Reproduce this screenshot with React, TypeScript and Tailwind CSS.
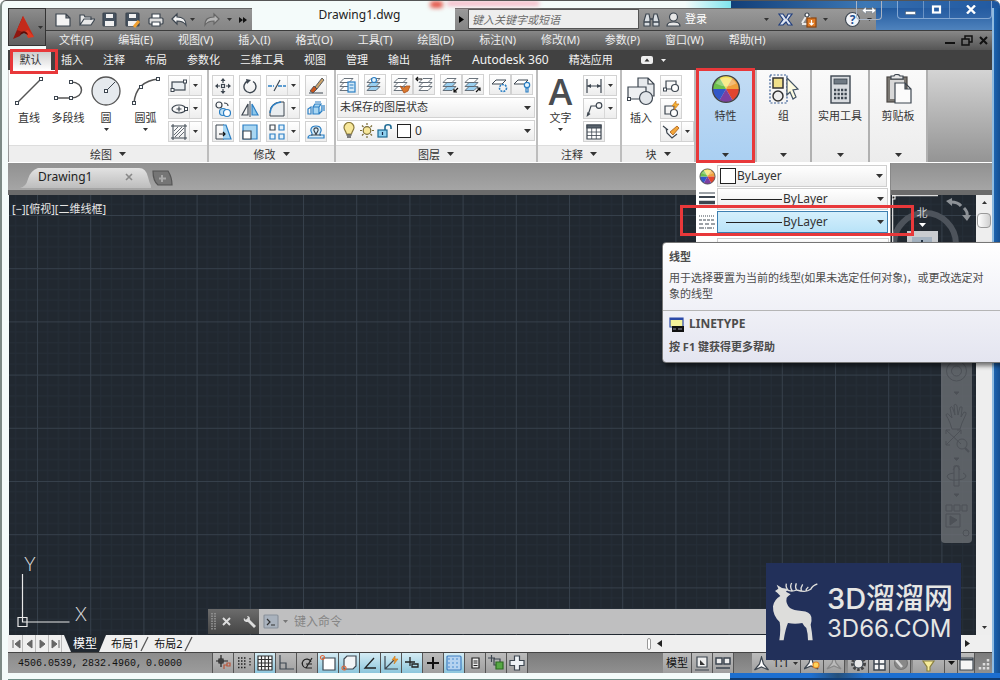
import type { ReactNode } from "react";
import clsx from "clsx";

const INK = "#3d4650";
const BLUE = "#2b7fc4";

function Svg({ w = 18, h, box, children }: { w?: number; h?: number; box?: string; children: ReactNode }) {
  const height = h ?? w;
  return (
    <svg
      width={w}
      height={height}
      viewBox={box ?? `0 0 ${w} ${height}`}
      fill="none"
      stroke={INK}
      strokeWidth={1.2}
      className="block shrink-0"
      aria-hidden="true"
    >
      {children}
    </svg>
  );
}

function Caret({ small = false, color = "#333" }: { small?: boolean; color?: string }) {
  return (
    <svg
      width={small ? 5 : 7}
      height={small ? 3 : 4}
      viewBox="0 0 8 4"
      preserveAspectRatio="none"
      className="block shrink-0"
      aria-hidden="true"
    >
      <path d="M0 0h8L4 4z" fill={color} />
    </svg>
  );
}

/* ---------- drawing pieces reused by several icons ---------- */

function Node({ x, y }: { x: number; y: number }) {
  return <rect x={x - 1.5} y={y - 1.5} width={3} height={3} fill="#fff" strokeWidth={1} />;
}

function Sheets({ tint = "#fff", x = 0 }: { tint?: string; x?: number }) {
  return (
    <g transform={`translate(${x} 0)`} fill={tint} stroke="#59636d" strokeWidth={0.9}>
      <path d="M1 14.500l4-4h9l-4 4z" />
      <path d="M1 10.500l4-4h9l-4 4z" />
      <path d="M1 6.500l4-4h9l-4 4z" fill="#fff" />
    </g>
  );
}

function Wheel({ size }: { size: number }) {
  const colors = ["#f6e35a", "#f0a03c", "#e2452f", "#7c3fa0", "#3157c8", "#6cbf4b"];
  const pt = (i: number) => {
    const a = ((i * 60 - 120) * Math.PI) / 180;
    return `${16 + 14 * Math.cos(a)} ${16 + 14 * Math.sin(a)}`;
  };
  return (
    <Svg w={size} box="0 0 32 32">
      {colors.map((c, i) => (
        <path key={c} d={`M16 16L${pt(i)}A14 14 0 0 1 ${pt(i + 1)}z`} fill={c} stroke="none" />
      ))}
      <path d="M5 10a13 13 0 0 1 22 0q-11 6-22 0z" fill="#fff" opacity={0.3} stroke="none" />
      <circle cx={16} cy={16} r={14.3} stroke="#444" strokeWidth={1.5} />
    </Svg>
  );
}

/* ---------- title bar ---------- */

const quickAccess: { label: string; icon: ReactNode }[] = [
  {
    label: "新建",
    icon: <path d="M1 3h10l4 4v8H1zM11 3v4h4" fill="#f4f4f4" />,
  },
  {
    label: "打开",
    icon: <path d="M2 14V4h4l1 2h6v3M2 14l4-6h11l-4 6z" fill="#e8e8e8" />,
  },
  {
    label: "保存",
    icon: (
      <>
        <rect x={2} y={2} width={13} height={13} rx={1} fill="#46525f" />
        <path d="M5 3h7v4H5zM4 10h9v5H4z" fill="#f0f0f0" stroke="none" />
      </>
    ),
  },
  {
    label: "另存为",
    icon: (
      <>
        <rect x={2} y={2} width={13} height={13} rx={1} fill="#46525f" />
        <path d="M5 3h7v4H5zM4 10h9v5H4z" fill="#f0f0f0" stroke="none" />
        <path d="M10 16l5-6" stroke="#f0a030" strokeWidth={3} />
      </>
    ),
  },
  {
    label: "打印",
    icon: (
      <>
        <path d="M5 7V3h8v4" fill="#fff" />
        <rect x={2} y={7} width={14} height={6} rx={1} fill="#ddd" />
        <path d="M5 11h8v4H5z" fill="#fff" />
      </>
    ),
  },
  {
    label: "放弃",
    icon: <path d="M2 8l5-5v3c6 0 9 2 9 8-2-3-4-4-9-4v3z" fill="#f4f4f4" />,
  },
];

function QuickAccess() {
  return (
    <div className="flex w-[206px] items-center bg-linear-to-b from-[#969696] to-[#858585] pl-1.5 shadow-[inset_0_1px_0_#666]">
      {quickAccess.map((q) => (
        <button key={q.label} type="button" aria-label={q.label} className="flex w-[23px] justify-center">
          <Svg w={17}>{q.icon}</Svg>
        </button>
      ))}
      <button type="button" aria-label="放弃列表" className="w-3">
        <Caret small />
      </button>
      <button type="button" aria-label="重做" className="flex w-[21px] justify-center">
        <Svg w={17}>
          <path d="M15 8l-5-5v3C4 6 1 8 1 14c2-3 4-4 9-4v3z" fill="#b4b4b4" stroke="#666" />
        </Svg>
      </button>
      <button type="button" aria-label="重做列表" className="w-3 pl-1">
        <Caret small />
      </button>
      <button type="button" aria-label="更多" className="ml-1">
        <Svg w={8} h={7}>
          <path d="M0 1l4 3-4 3zM4 1l4 3-4 3z" fill="#111" stroke="none" />
        </Svg>
      </button>
    </div>
  );
}

function InfoCenter() {
  return (
    <div className="flex w-[421px] items-center bg-linear-to-b from-[#9a9a9a] to-[#848484] shadow-[inset_0_1px_0_#666]">
      <button type="button" aria-label="折叠搜索" className="flex w-[13px] justify-center">
        <Svg w={5} h={7}>
          <path d="M0 0l5 3.500L0 7z" fill="#000" stroke="none" />
        </Svg>
      </button>
      <input
        type="text"
        aria-label="搜索"
        placeholder="键入关键字或短语"
        className="h-[20px] w-[171px] border border-[#555] bg-[#eee] px-[3px] text-[11px] italic outline-none placeholder:text-[#6b6b6b]"
      />
      <button type="button" aria-label="查找" className="ml-1">
        <Svg w={17}>
          <path d="M1 15v-5l2-7h3l1 5v7zM16 15v-5l-2-7h-3l-1 5v7z" fill="#d8dde2" />
          <path d="M7 8h3M1 11h6M10 11h6" strokeWidth={1.500} />
        </Svg>
      </button>
      <button type="button" className="ml-1.5 flex items-center gap-1 text-[11px] text-white">
        <Svg w={15} h={17}>
          <circle cx={7.500} cy={6} r={4} fill="#e8e8e8" />
          <path d="M1 15c0-3 3-4 6.500-4s6.500 1 6.500 4z" fill="#e8e8e8" />
        </Svg>
        登录
      </button>
      <div className="ml-auto flex items-center">
        <Caret small />
        <button type="button" aria-label="Exchange" className="ml-2">
          <Svg w={17}>
            <path d="M2 3h4l3 4 2-4h4l-4 5.500 4 5.500h-4l-2-3-3 3H2l4-5.500z" fill="#dfe6f2" stroke="#23407e" />
          </Svg>
        </button>
        <button type="button" aria-label="连接" className="mx-1.5">
          <Svg w={17}>
            <path d="M2 12l5-8 4 4M2 13h5" stroke="#e9e9e9" strokeWidth={2} />
            <circle cx={7} cy={4} r={2} fill="#fff" />
            <rect x={7} y={7} width={9} height={9} fill="#e07b25" stroke="#8a4510" />
            <path d="M11.500 9v5m-2-2l2 2 2-2" stroke="#fff" />
          </Svg>
        </button>
        <Caret small />
        <button type="button" aria-label="帮助" className="ml-4">
          <Svg w={17}>
            <circle cx={8.500} cy={8.500} r={7} fill="#f3f6fb" />
            <text x={8.500} y={13} textAnchor="middle" fontSize={12} fontWeight={700} fill="#24508f" stroke="none">
              ?
            </text>
          </Svg>
        </button>
        <span className="mr-1 ml-1.5">
          <Caret small />
        </span>
      </div>
    </div>
  );
}

function WindowControls() {
  return (
    <>
      <div className="absolute top-0 right-[118px] flex h-[19px] w-[26px] items-center justify-center rounded-b border border-t-0 border-[#a9b4c4]">
        <Svg w={14} h={9}>
          <path d="M0 4.500L4 1v2.500h6V1l4 3.500L10 8V5.500H4V8z" fill="#fff" stroke="#678" strokeWidth={0.500} />
        </Svg>
      </div>
      <div className="absolute top-0 right-2 flex h-[18px] w-[95px] rounded-b border border-t-0 border-[#a9c4e4]/70 bg-[#2a5fa6]/40">
        <button type="button" aria-label="最小化" className="flex w-[26px] items-center justify-center border-r border-[#a9c4e4]/50 pt-1.5">
          <Svg w={11} h={4}>
            <rect x={0.500} y={0.500} width={10} height={3} fill="#fff" stroke="#456" strokeWidth={0.500} />
          </Svg>
        </button>
        <button type="button" aria-label="最大化" className="flex w-[26px] items-center justify-center border-r border-[#a9c4e4]/50">
          <Svg w={11} h={9}>
            <rect x={2} y={1.500} width={7} height={6} stroke="#fff" strokeWidth={2.200} />
          </Svg>
        </button>
        <button type="button" aria-label="关闭" className="flex flex-1 items-center justify-center">
          <Svg w={10} h={9}>
            <path d="M1 0.500l8 8M9 0.500l-8 8" stroke="#fff" strokeWidth={2.400} />
          </Svg>
        </button>
      </div>
    </>
  );
}

const menus = [
  "文件(F)",
  "编辑(E)",
  "视图(V)",
  "插入(I)",
  "格式(O)",
  "工具(T)",
  "绘图(D)",
  "标注(N)",
  "修改(M)",
  "参数(P)",
  "窗口(W)",
  "帮助(H)",
];

function Header() {
  return (
    <header className="flex">
      <button
        type="button"
        aria-label="应用程序菜单"
        className="flex h-[38px] w-[38px] shrink-0 items-center gap-0.5 border border-[#333] bg-linear-to-b from-[#8c8c8c] to-[#5f5f5f] pl-[3px]"
      >
        <Svg w={24} h={25}>
          <path d="M11 1L1 24l7-3 4-7z" fill="#8e1710" stroke="none" />
          <path d="M11 1l11 21-6 1-5-11z" fill="#e23a22" stroke="none" />
          <path d="M11 1l-6 14 6 2 5-2 6 7z" fill="#c42a1a" stroke="none" />
          <path d="M8 20c1-5 7-5 8 0l-4-2z" fill="#5a0d08" stroke="none" />
        </Svg>
        <Caret small />
      </button>
      <div className="flex min-w-0 flex-1 flex-col">
        <div className="flex h-[22px]">
          <QuickAccess />
          <h1 className="flex w-[203px] justify-center pl-3 text-[12px] leading-[14px] text-[#222]">Drawing1.dwg</h1>
          <InfoCenter />
          <div className="flex-1 bg-linear-to-b from-[#225a9e] to-[#4f83bd]" />
        </div>
        <nav className="flex h-[20px] items-center bg-linear-to-b from-[#8b8b8b] to-[#555] pl-[13px] text-[11px] text-[#eee] shadow-[inset_0_1px_0_#3c3c3c]">
          <ul className="flex gap-[25px]">
            {menus.map((m) => (
              <li key={m}>
                <button type="button" className="block whitespace-nowrap">
                  {m}
                </button>
              </li>
            ))}
          </ul>
          <div className="ml-auto flex items-center gap-1.5 pr-1">
            <Svg w={10} h={9}>
              <path d="M0 7h10" stroke="#111" strokeWidth={2} />
            </Svg>
            <Svg w={12} h={11}>
              <path d="M4 4V1h7v6H8M1 4h7v6H1z" stroke="#111" strokeWidth={1.500} />
            </Svg>
            <Svg w={9}>
              <path d="M1 1l7 7M8 1L1 8" stroke="#111" strokeWidth={2} />
            </Svg>
          </div>
        </nav>
      </div>
    </header>
  );
}

const ribbonTabs = ["插入", "注释", "布局", "参数化", "三维工具", "视图", "管理", "输出", "插件", "Autodesk 360", "精选应用"];

function RibbonTabs() {
  return (
    <div className="flex h-[20px] items-center gap-5 bg-[#414141] text-[11px] text-[#f2f2f2]">
      <button type="button" className="relative ml-0.5 -mr-2.5 h-[20px] w-[41px] bg-linear-to-b from-[#c9c9c9] to-white text-[#333]">
        默认
        <span className="absolute -top-px left-0 z-20 h-[25px] w-[48px] border-[3px] border-[#e8383a]" />
      </button>
      {ribbonTabs.map((t) => (
        <button key={t} type="button" className={clsx("whitespace-nowrap", t.startsWith("A") && "text-[12px]")}>
          {t}
        </button>
      ))}
      <button type="button" aria-label="最小化功能区" className="ml-2 flex items-center gap-2">
        <Svg w={12} h={8}>
          <rect x={0} y={0} width={12} height={8} rx={2} fill="#eee" stroke="none" />
          <path d="M3.500 5.500L6 2.500l2.500 3z" fill="#333" stroke="none" />
        </Svg>
        <Caret small color="#eee" />
      </button>
    </div>
  );
}

/* ---------- ribbon ---------- */

function Panel({ title, className, children }: { title: string; className: string; children: ReactNode }) {
  return (
    <section className={clsx("flex shrink-0 flex-col border-r-2 border-[#bdbdbd] bg-white", className)}>
      <div className="flex flex-1 items-start">{children}</div>
      <button
        type="button"
        className="flex h-[17px] items-center justify-center gap-[7px] border-t border-[#ddd] bg-[#eeeeee] text-[11px] leading-none text-[#333]"
      >
        {title}
        <Caret />
      </button>
    </section>
  );
}

function BigTool({ label, caret, className, children }: { label: string; caret?: boolean; className: string; children: ReactNode }) {
  return (
    <button type="button" className={clsx("flex flex-col items-center pt-1.5 text-[11px] leading-[16px] text-[#333]", className)}>
      {children}
      <span className="mt-1 whitespace-nowrap">{label}</span>
      {caret && (
        <span className="mt-0.5">
          <Caret small />
        </span>
      )}
    </button>
  );
}

function Tool({ label, caret, children }: { label: string; caret?: boolean; children: ReactNode }) {
  return (
    <div className="flex h-[21px] border border-[#d2d2d2] bg-linear-to-b from-white to-[#ededed]">
      <button type="button" aria-label={label} className="flex w-[20px] items-center justify-center">
        <Svg w={18}>{children}</Svg>
      </button>
      {caret && (
        <button
          type="button"
          aria-label={`${label}选项`}
          className="flex w-[12px] items-center justify-center border-l border-[#d8d8d8]"
        >
          <Caret small />
        </button>
      )}
    </div>
  );
}

function DrawPanel() {
  return (
    <Panel title="绘图" className="w-[200px]">
      <BigTool label="直线" className="w-[40px]">
        <Svg w={30}>
          <path d="M3 27L27 3" stroke="#555" strokeWidth={1.500} />
          <Node x={3} y={27} />
          <Node x={27} y={3} />
        </Svg>
      </BigTool>
      <BigTool label="多段线" className="w-[38px]">
        <Svg w={30}>
          <path d="M3 22h15c14 0 14-16 0-16" stroke="#555" strokeWidth={1.500} />
          <Node x={3} y={22} />
          <Node x={18} y={22} />
          <Node x={18} y={6} />
        </Svg>
      </BigTool>
      <BigTool label="圆" caret className="w-[38px]">
        <Svg w={30}>
          <circle cx={15} cy={15} r={14} fill="#e6eaee" stroke="#555" strokeWidth={1.300} />
          <path d="M15 15l9-9" strokeWidth={1} />
          <Node x={15} y={15} />
        </Svg>
      </BigTool>
      <BigTool label="圆弧" caret className="w-[41px]">
        <Svg w={30}>
          <path d="M3 27Q5 5 28 3" stroke="#555" strokeWidth={1.500} />
          <Node x={3} y={27} />
          <Node x={10} y={11} />
          <Node x={27} y={3} />
        </Svg>
      </BigTool>
      <div className="flex flex-col gap-0.5 pt-[5px] pl-0.5">
        <Tool label="矩形" caret>
          <rect x={2} y={5} width={13} height={8} fill="#e9edf0" />
          <Node x={2.500} y={13} />
          <Node x={15} y={4.500} />
        </Tool>
        <Tool label="椭圆" caret>
          <ellipse cx={9} cy={9} rx={7} ry={4} />
          <path d="M9 6.500v5M6.500 9h5" />
          <Node x={16} y={9} />
        </Tool>
        <Tool label="图案填充" caret>
          <path d="M3 1v16M15 1v16M1 3h16M1 15h16" strokeWidth={1} />
          <path d="M4 8l4-4M4 12l8-8M5 14l9-9M9 14l5-5" strokeWidth={0.800} />
        </Tool>
      </div>
    </Panel>
  );
}

function ModifyPanel() {
  return (
    <Panel title="修改" className="w-[127px]">
      <div className="grid grid-cols-[22px_22px_34px_22px] gap-x-[5px] gap-y-0.5 pt-[5px] pl-[3px]">
        <Tool label="移动">
          <path d="M9 2v4M9 12v4M2 9h4M12 9h4" />
          <path d="M9 1l2.500 3h-5zM9 17l2.500-3h-5zM1 9l3-2.500v5zM17 9l-3-2.500v5z" fill={INK} stroke="none" />
          <rect x={7.500} y={7.500} width={3} height={3} />
        </Tool>
        <Tool label="旋转">
          <path d="M7 4a6 6 0 1 0 5 .5" strokeWidth={1.400} />
          <path d="M5 2l5 1-4 4z" fill={INK} stroke="none" />
        </Tool>
        <Tool label="修剪" caret>
          <path d="M0 9h6M10 9h8" stroke={BLUE} strokeDasharray="4 1" strokeWidth={1.500} />
          <path d="M6 14l6-11" />
        </Tool>
        <Tool label="删除">
          <path d="M2 16h14" />
          <path d="M8 10l7-9 2 2-7 9z" fill="#caa26a" strokeWidth={0.800} />
          <path d="M3 14l4-5 3 3-4 4z" fill="#c8561d" strokeWidth={0.800} />
        </Tool>
        <Tool label="复制">
          <circle cx={5} cy={5} r={3} />
          <path d="M10 3c3 0 4 1 4 3" />
          <circle cx={9} cy={12} r={3.500} stroke={BLUE} fill="#bfe0f5" />
          <circle cx={13} cy={13} r={3.500} stroke={BLUE} fill="#fff" />
        </Tool>
        <Tool label="镜像">
          <path d="M7 4v11H1z" />
          <path d="M11 4v11h6z" stroke={BLUE} fill="#8cc6ea" />
          <path d="M9 1v16" strokeWidth={1} />
        </Tool>
        <Tool label="圆角" caret>
          <path d="M2 16V11Q3 3 12 2h4v14z" fill="#e9edf0" strokeWidth={1} />
          <path d="M2 13Q3 3 13 2" stroke={BLUE} strokeWidth={1.500} />
        </Tool>
        <Tool label="分解">
          <path d="M6 7h6v7H6zM6 7l2-3h6l-2 3M12 14l3-3V5" stroke={BLUE} fill="#a8d6f2" />
          <path d="M4 7L1 9v5h3zM8 2h6M17 5v6" stroke={BLUE} />
        </Tool>
        <Tool label="拉伸">
          <path d="M10 2H2v14h8" strokeWidth={1} />
          <path d="M9 2h3l5 14H9" stroke={BLUE} fill="#a8d6f2" />
          <path d="M5 11h6m-2-2l2 2-2 2" stroke="#111" />
        </Tool>
        <Tool label="缩放">
          <path d="M2 2h14v14H2z" stroke={BLUE} fill="#a8d6f2" />
          <path d="M2 8h8v8H2z" fill="#fff" />
        </Tool>
        <Tool label="阵列" caret>
          <path d="M2 2h5v5H2z" />
          <path d="M11 2h5v5h-5zM2 11h5v5H2zM11 11h5v5h-5z" stroke={BLUE} fill="#e2f1fb" />
        </Tool>
        <Tool label="偏移">
          <path d="M1 15h16v-3h-4c-1-2 2-3 1-6-1-4-9-4-10 0-1 3 2 4 1 6-3 0-4 1-4 3z" stroke={BLUE} fill="#d6ecf9" />
          <path d="M4 12h5c0-2-3-4-2-6 1-1.500 3-1.500 4 0 1 2-2 4-2 6h5" />
        </Tool>
      </div>
    </Panel>
  );
}

function LayerPanel() {
  return (
    <Panel title="图层" className="w-[202px]">
      <div className="flex flex-1 flex-col gap-0.5 px-px pt-1">
        <div className="flex justify-between pr-0.5">
          <Tool label="图层特性">
            <Sheets />
            <rect x={9} y={6} width={7} height={10} fill="#d3e9f7" stroke={BLUE} />
            <path d="M10.500 9h4M10.500 12h4" stroke={BLUE} />
          </Tool>
          <Tool label="图层状态">
            <Sheets tint="#9bd0f0" />
            <circle cx={8} cy={4} r={2.500} fill="#e6f4fc" stroke={BLUE} />
          </Tool>
          <div className="flex">
            <Tool label="匹配图层">
              <Sheets />
              <path d="M7 10l4 2 2-2 4 0-2 5-4 2z" fill="#d9772e" stroke="#a8501a" strokeWidth={0.800} />
            </Tool>
            <Tool label="上一个">
              <Sheets x={3} />
              <path d="M1 3h6M3 1L1 3l2 2" stroke="#111" />
            </Tool>
          </div>
          <div className="flex">
            <Tool label="隔离">
              <Sheets tint="#9bd0f0" />
              <path d="M16 12l-4 4m0-3v3h3" stroke="#111" />
            </Tool>
            <Tool label="取消隔离">
              <Sheets tint="#9bd0f0" />
              <path d="M12 16l4-4m-3 0h3v3" stroke="#111" />
            </Tool>
          </div>
          <div className="flex">
            <Tool label="冻结">
              <path d="M1 8l4-4h10l-4 4z" fill="#fff" strokeWidth={1} />
              <circle cx={12} cy={12} r={3.500} stroke={BLUE} strokeDasharray="2 1" strokeWidth={1.600} />
            </Tool>
            <Tool label="关闭图层">
              <path d="M1 8l4-4h10l-4 4z" fill="#fff" strokeWidth={1} />
              <circle cx={14} cy={9} r={2.700} stroke={BLUE} fill="#e2f3fd" />
              <path d="M13 12h2v4h-2z" stroke={BLUE} />
            </Tool>
          </div>
        </div>
        <div className="relative flex h-[21px] items-center border border-[#d2d2d2] bg-linear-to-b from-white to-[#ededed]">
          <select aria-label="图层状态" className="h-full w-full appearance-none bg-transparent pl-0.5 text-[11px] text-[#333] outline-none">
            <option>未保存的图层状态</option>
          </select>
          <span className="pointer-events-none absolute right-[3px]">
            <Caret />
          </span>
        </div>
        <div className="relative flex h-[21px] items-center gap-0.5 border border-[#d2d2d2] bg-linear-to-b from-white to-[#ededed] pl-[3px]">
          <Svg w={16} h={17}>
            <path d="M5.500 12C5 9 3 8 3 5.500a5 5 0 0 1 10 0C13 8 11 9 10.500 12z" fill="#f7e79a" stroke="#8a7a3a" />
            <path d="M5.500 13h5M6 15h4" stroke="#555" strokeWidth={1.500} />
          </Svg>
          <Svg w={16} h={17}>
            <circle cx={8} cy={8.500} r={3.800} fill="#f7e79a" stroke="#7a6c36" />
            <path d="M8 1v2M8 14v2M1 8.500h2M13 8.500h2M3 3.500l1.500 1.500M11.500 12l1.500 1.500M13 3.500L11.500 5M4.500 12L3 13.500" stroke="#7a6c36" />
          </Svg>
          <Svg w={16} h={17}>
            <rect x={1} y={8} width={9} height={7} fill="#8fd0ee" stroke="#1d6a94" />
            <path d="M8 8V5c0-3 6-3 6 0v2" stroke="#1d6a94" strokeWidth={1.600} />
            <path d="M5.500 10v3" stroke="#124" />
          </Svg>
          <span className="ml-0.5 h-[14px] w-[14px] shrink-0 border border-[#222] bg-white" />
          <select aria-label="图层" className="h-full w-full appearance-none bg-transparent pl-0.5 text-[12px] text-[#333] outline-none">
            <option>0</option>
          </select>
          <span className="pointer-events-none absolute right-[3px]">
            <Caret />
          </span>
        </div>
      </div>
    </Panel>
  );
}

function AnnotatePanel() {
  return (
    <Panel title="注释" className="w-[84px]">
      <BigTool label="文字" caret className="w-[45px]">
        <span className="block h-[30px] font-['Open_Sans','Noto_Sans',sans-serif] text-[36px] leading-[32px] font-semibold text-[#4a4d51]">A</span>
      </BigTool>
      <div className="flex flex-col items-start gap-0.5 pt-[5px]">
        <Tool label="线性标注" caret>
          <path d="M2 2v14M16 2v14M2 9h14" />
          <path d="M2 9l4-2v4zM16 9l-4-2v4z" fill={INK} stroke="none" />
        </Tool>
        <Tool label="引线" caret>
          <path d="M3 15L6 6h5" />
          <path d="M1.500 17l1-5 3 2z" fill={INK} stroke="none" />
          <circle cx={14} cy={5.500} r={2.800} />
        </Tool>
        <Tool label="表格">
          <path d="M2 2h14v14H2z" fill="#fff" />
          <path d="M2 2h14v3H2z" fill="#59636d" />
          <path d="M2 9h14M2 12.500h14M6.700 5v11M11.300 5v11" strokeWidth={0.800} />
        </Tool>
      </div>
    </Panel>
  );
}

function BlockPanel() {
  return (
    <Panel title="块" className="w-[74px]">
      <BigTool label="插入" className="w-[38px]">
        <Svg w={30}>
          <path d="M12 2h10l6 6v12H12zM22 2v6h6" fill="#e6e9ec" />
          <path d="M2 11h18v12H2z" fill="#eef0f2" />
          <circle cx={20} cy={22} r={6.500} fill="#e2e6ea" />
          <Node x={3} y={23} />
        </Svg>
      </BigTool>
      <div className="flex flex-col items-start gap-0.5 pt-[5px]">
        <Tool label="创建块">
          <path d="M4 4h10v8H4z" />
          <circle cx={13} cy={11} r={3.500} fill="#fff" />
          <Node x={3} y={12.500} />
        </Tool>
        <Tool label="块编辑器">
          <path d="M3 6h9v8H3z" />
          <circle cx={12} cy={13} r={3.500} fill="#fff" />
          <path d="M14 1l-4 5h3l-1 4 5-6h-3z" fill="#f5b335" stroke="#c9761a" strokeWidth={0.700} />
        </Tool>
        <Tool label="编辑属性" caret>
          <path d="M1 3l5 4M4 5l1 5 5 5 5-4" />
          <path d="M8 9l7-6 2 2-6 7z" fill="#f3a63a" stroke="#a55b16" strokeWidth={0.800} />
        </Tool>
      </div>
    </Panel>
  );
}

function FoldedPanel({ label, className, icon, children }: { label: string; className: string; icon: ReactNode; children?: ReactNode }) {
  return (
    <section className={clsx("relative shrink-0 border-r-2", className)}>
      <button type="button" className="flex h-full w-full flex-col items-center pt-1 pb-[5px] text-[11px] leading-[16px] text-[#333]">
        {icon}
        <span className="mt-1 whitespace-nowrap">{label}</span>
        <span className="mt-auto">
          <Caret />
        </span>
      </button>
      {children}
    </section>
  );
}

function PropertyRow({ label, icon, active, swatch, className }: { label: string; icon: ReactNode; active?: boolean; swatch?: boolean; className?: string }) {
  return (
    <div className={clsx("flex shrink-0 items-center", className)}>
      <span className="flex w-[20px] justify-center">{icon}</span>
      <div
        className={clsx(
          "relative flex h-[22px] flex-1 items-center border",
          active ? "border-[#3c7fb1] bg-linear-to-b from-[#d4effc] to-[#b9e3f8]" : "border-[#cfcfcf] bg-linear-to-b from-white to-[#ededed]"
        )}
      >
        {swatch ? (
          <span className="ml-0.5 h-[16px] w-[16px] shrink-0 border border-[#222] bg-white" />
        ) : (
          <span className={clsx("h-px shrink-0 bg-[#222]", active ? "ml-2 w-[56px]" : "ml-[3px] w-[61px]")} />
        )}
        <select aria-label={label} className="h-full w-full appearance-none bg-transparent pl-px text-[12px] text-[#333] outline-none">
          <option>ByLayer</option>
        </select>
        <span className="pointer-events-none absolute right-[3px]">
          <Caret />
        </span>
      </div>
    </div>
  );
}

function LinetypeTip() {
  return (
    <div
      role="tooltip"
      className="absolute top-[172px] -left-[34px] z-30 h-[121px] w-[346px] rounded-sm border border-[#767676] bg-linear-to-b from-white to-[#e4e5f0] text-[11px] leading-[16px] text-[#4c4c4c] shadow-[2px_3px_4px_rgba(0,0,0,0.5)]"
    >
      <div className="h-[68px] border-b border-[#b5b5b5] pt-1.5 pl-1.5">
        <p className="font-bold">线型</p>
        <p className="mt-[5px] w-[324px]">用于选择要置为当前的线型(如果未选定任何对象)，或更改选定对象的线型</p>
      </div>
      <div className="flex items-center gap-1 pt-[5px] pl-1.5 text-[12px] font-bold">
        <Svg w={16} h={15}>
          <path d="M1 1h13v9H1z" fill="#f5f29a" stroke="#2b49a8" />
          <path d="M1 2h13" stroke="#2b49a8" strokeWidth={2} />
          <path d="M3 9h12v6H3z" fill="#111" stroke="none" />
          <path d="M4 12h3M9 12h4" stroke="#99a" />
        </Svg>
        LINETYPE
      </div>
      <p className="mt-[7px] pl-1.5 font-bold">按 F1 键获得更多帮助</p>
    </div>
  );
}

function PropertiesPanel() {
  return (
    <FoldedPanel
      label="特性"
      className="z-20 w-[61px] border-[#bdbdbd] bg-linear-to-b from-[#c3dcf4] to-[#a9cff2]"
      icon={<Wheel size={30} />}
    >
      <span className="absolute inset-x-0 -top-0.5 -bottom-px border-[3px] border-[#e8383a]" />
      <div className="absolute top-[93px] left-0 flex h-[79px] w-[195px] flex-col gap-px overflow-hidden border-r border-[#888] bg-white px-px pt-0.5">
        <PropertyRow label="对象颜色" swatch icon={<Wheel size={17} />} className="pr-0.5" />
        <PropertyRow
          label="线宽"
          className="pr-px"
          icon={
            <Svg w={16}>
              <path d="M0 2h16" strokeWidth={1} />
              <path d="M0 6h16" strokeWidth={2} />
              <path d="M0 11.500h16" strokeWidth={3.500} />
            </Svg>
          }
        />
        <PropertyRow
          label="线型"
          active
          className="pr-px"
          icon={
            <Svg w={16}>
              <path d="M0 2h16" strokeDasharray="1 1" />
              <path d="M0 6h16" strokeDasharray="3 1" />
              <path d="M0 10h16" strokeDasharray="4 2" />
              <path d="M0 14h16" strokeDasharray="5 1 1 1" />
            </Svg>
          }
        />
        <PropertyRow
          label="打印样式"
          className="mt-1"
          icon={
            <Svg w={10}>
              <path d="M0 2h10v8H0z" fill="#777" />
            </Svg>
          }
        />
      </div>
      <span className="absolute top-[135px] -left-[16px] z-40 h-[31px] w-[234px] border-[3px] border-[#e8383a]" />
      <LinetypeTip />
    </FoldedPanel>
  );
}

function Ribbon() {
  const folded = "border-[#b0b0b0] bg-linear-to-b from-[#fafafa] to-[#ececec]";
  return (
    <div className="flex h-[93px] border-b border-white bg-linear-to-b from-[#d4d4d4] to-[#949494] pl-px">
      <DrawPanel />
      <ModifyPanel />
      <LayerPanel />
      <AnnotatePanel />
      <BlockPanel />
      <PropertiesPanel />
      <FoldedPanel
        label="组"
        className={clsx("w-[55px]", folded)}
        icon={
          <Svg w={30}>
            <rect x={1} y={1} width={17} height={28} stroke="#3a5f96" strokeDasharray="2 1.500" />
            <rect x={4} y={4} width={10} height={10} fill="#f0e08a" stroke="#333" strokeWidth={1.500} />
            <circle cx={9} cy={22} r={5} stroke="#333" fill="#eee" strokeWidth={1.500} />
            <path d="M18 4l11 11-5 1 3 7-3 2-3-7-3 3z" fill="#fdfbe0" stroke="#456" />
          </Svg>
        }
      />
      <FoldedPanel
        label="实用工具"
        className={clsx("w-[58px]", folded)}
        icon={
          <Svg w={30}>
            <rect x={6} y={2} width={19} height={27} fill="#d9dce0" strokeWidth={1.400} />
            <rect x={9} y={5} width={13} height={5} fill="#6f7983" strokeWidth={0.800} />
            <path d="M9 16h13M9 20h13M9 24h13" strokeWidth={2.600} strokeDasharray="2.300 1.200" />
          </Svg>
        }
      />
      <FoldedPanel
        label="剪贴板"
        className={clsx("w-[58px]", folded)}
        icon={
          <Svg w={30}>
            <rect x={4} y={3} width={20} height={25} fill="#7a7772" stroke="#4a4744" />
            <rect x={7} y={6} width={14} height={19} fill="#d8d8d8" stroke="none" />
            <path d="M8 5h12V2h-3c0-2-6-2-6 0H8z" fill="#e8e8e8" />
            <path d="M12 9h10l6 6v14H12zM22 9v6h6" fill="#fbfbfb" />
          </Svg>
        }
      />
    </div>
  );
}

/* ---------- drawing area ---------- */

function FileTabs() {
  return (
    <div className="flex h-[32px] items-start border-b-[5px] border-[#6b6b6b] bg-linear-to-b from-[#919191] to-[#a5a5a5] pt-1">
      <div className="relative isolate flex h-[23px] w-[139px] items-center pl-[30px] text-[12px] text-[#222]">
        <svg width="131" height="21" viewBox="0 0 131 21" className="absolute top-0 left-3 -z-10" aria-hidden="true">
          <defs>
            <linearGradient id="tab" x1="0" y1="0" x2="0" y2="1">
              <stop offset="0" stopColor="#e2e2e2" />
              <stop offset="1" stopColor="#bdbdbd" />
            </linearGradient>
          </defs>
          <path d="M0 21Q6 20 8 12T18 1h101q7 0 9 9t5 11z" fill="url(#tab)" />
        </svg>
        <button type="button" className="-mt-1">
          Drawing1
        </button>
        <button type="button" aria-label="关闭文件" className="-mt-1 ml-auto mr-[14px]">
          <Svg w={8}>
            <path d="M1 1l6 6M7 1L1 7" stroke="#888" strokeWidth={1.600} />
          </Svg>
        </button>
      </div>
      <button type="button" aria-label="新图形" className="mt-[3px] ml-1">
        <Svg w={22} h={16}>
          <path d="M2 1h15q4 6 4 14H7Q2 11 2 1z" fill="#757575" stroke="#555" />
          <path d="M11 5v7M8 8.500h7" stroke="#a8a8a8" strokeWidth={2} />
        </Svg>
      </button>
    </div>
  );
}

function Grid() {
  return (
    <svg className="absolute inset-0 h-full w-full" aria-hidden="true">
      <defs>
        <pattern id="grid" width="53.2" height="53.2" patternUnits="userSpaceOnUse" x="28" y="20">
          <path
            d="M10.600 0v53.200M21.300 0v53.200M31.900 0v53.200M42.600 0v53.200M0 10.600h53.200M0 21.300h53.200M0 31.900h53.200M0 42.600h53.200"
            stroke="#252d37"
          />
          <path d="M0.500 0v53.200M0 0.500h53.200" stroke="#36404b" />
        </pattern>
      </defs>
      <rect width="100%" height="100%" fill="url(#grid)" />
    </svg>
  );
}

function ViewCube() {
  return (
    <svg width="84" height="60" viewBox="892 195 84 60" fill="none" className="absolute top-0 right-4" aria-hidden="true">
      <circle cx="925" cy="244" r="31" stroke="#4d535b" strokeWidth="6" />
      <path d="M892 195.500h46M892.500 199v50" stroke="#dcdcdc" strokeWidth="1.500" />
      <rect x="892" y="196" width="3" height="3" fill="#222" stroke="#fff" />
      <path d="M907 231h31v24h-31z" fill="#c9ccd0" />
      <path d="M912 237h20v12h-20z" fill="#a4b2c0" />
      <path d="M922 240v12" stroke="#234" strokeWidth="2" />
      <text x="922" y="217" fontSize="11" fill="#d0d3d6" textAnchor="middle">
        北
      </text>
      <path d="M919 223h7l-3.500 4z" fill="#fff" />
      <path d="M951 202q7 0 10 4M964 208q4 4 3 8" stroke="#8d9196" strokeWidth="3" />
      <path d="M952 198v8l-6-5zM962 215h9l-4 6z" fill="#8d9196" />
    </svg>
  );
}

function NavBar() {
  return (
    <div className="absolute right-[20px] bottom-[92px] flex h-[190px] w-[31px] flex-col items-center rounded bg-[#6b6f74]/80 pt-[8px]">
      <Svg w={29} h={176}>
        <g stroke="#4d5157" strokeWidth={1}>
          <circle cx={14.500} cy={10} r={10} />
          <circle cx={14.500} cy={10} r={5} />
          <path d="M8 62q-2-5-4-8 1-3 4 1l2 2-2-10q2-3 3 1l2 6-1-10q2-2 3 1l1 9 2-8q3-1 2 2l-1 8 3-5q3 0 2 2l-4 9-2 6h-8z" />
          <path d="M4 69l15 14M19 69L4 84M4 73v-4h4M15 69h4v4M4 80v4h4" />
          <circle cx={20} cy={83} r={5} />
          <path d="M23 87l4 4" strokeWidth={2} />
          <path d="M12 105h5v20h-5zM11 109l3.500-5 3.500 5M12 112q-9 1-6 5t15 1q6-3 0-6" />
          <path d="M4 144h6v6H4zM12 144h6v6h-6zM20 144h5v6h-5zM4 153h14v13H4z" />
          <path d="M8 155l7 4-7 5z" fill="#4d5157" />
          <path d="M12 31h5l-2.500 2.500zM12 97h5l-2.500 2.500zM12 133h5l-2.500 2.500z" fill="#4d5157" />
          <circle cx={24} cy={172} r={3} />
        </g>
      </Svg>
    </div>
  );
}

function Ucs() {
  return (
    <svg width="82" height="78" viewBox="0 0 82 78" fill="none" stroke="#e8e8e8" className="absolute bottom-1.5 left-2" aria-hidden="true">
      <path d="M5.500 23v48h47M1 66.500h9v9H1z" strokeWidth="1.200" />
      <g fontFamily="Lato" fontWeight="300" fontSize="19" fill="#e0e0e0" stroke="none" textAnchor="middle">
        <text x="13" y="20">
          Y
        </text>
        <text x="64" y="70">
          X
        </text>
      </g>
    </svg>
  );
}

function CommandLine() {
  return (
    <div className="absolute right-[43px] bottom-px left-[199px] flex h-[25px] items-stretch">
      <div className="flex w-[51px] items-center gap-3 bg-linear-to-b from-[#6c6c6c] to-[#454545] pl-[3px]">
        <Svg w={5} h={17}>
          <path d="M1 0v17M4 0v17" stroke="#999" strokeDasharray="1.500 1" strokeWidth={1.500} />
        </Svg>
        <button type="button" aria-label="关闭命令行" className="-ml-1.5">
          <Svg w={9}>
            <path d="M1 1l7 7M8 1L1 8" stroke="#ddd" strokeWidth={2} />
          </Svg>
        </button>
        <button type="button" aria-label="自定义">
          <Svg w={13}>
            <path d="M4 4l8 8" stroke="#ddd" strokeWidth={2.800} />
            <path d="M1 3a3 3 0 1 0 3-2l1 2-2 2z" fill="#ddd" stroke="none" />
          </Svg>
        </button>
      </div>
      <label className="flex flex-1 items-center bg-[#bfbfc0] pl-1">
        <Svg w={16}>
          <rect x={1} y={1} width={14} height={13} rx={1} fill="#a9b2bd" stroke="#8a929b" />
          <path d="M4 5l3 3-3 3M8 11h4" stroke="#333" />
        </Svg>
        <span className="mx-1">
          <Caret small color="#777" />
        </span>
        <input
          type="text"
          aria-label="命令"
          placeholder="键入命令"
          className="w-full bg-transparent pl-0.5 text-[12px] outline-none placeholder:text-[#858585]"
        />
      </label>
    </div>
  );
}

function Canvas() {
  return (
    <main className="flex min-h-[440px] flex-1">
      <div className="relative ml-px flex-1 bg-[#212830]">
        <Grid />
        <p className="relative pt-1.5 pl-[3px] text-[11px] leading-[15px] text-[#e6e6e6]">[−][俯视][二维线框]</p>
        <ViewCube />
        <NavBar />
        <Ucs />
        <CommandLine />
      </div>
      <div className="relative -ml-4 flex w-[16px] flex-col items-center bg-[#eee] pt-1.5 pb-1">
        <Svg w={5} h={3}>
          <path d="M0 3h5L2.500 0z" fill="#333" stroke="none" />
        </Svg>
        <span className="mt-[9px] h-[15px] w-[14px] rounded-sm border border-[#999] bg-linear-to-r from-white to-[#d0d0d0]" />
        <span className="mt-auto mb-0.5">
          <Caret small color="#333" />
        </span>
      </div>
    </main>
  );
}

/* ---------- bottom bars ---------- */

function LayoutTabs() {
  const arrows = ["M3 2v8M10 2L5 6l5 4z", "M9 2L4 6l5 4z", "M4 2l5 4-5 4z", "M10 2v8M3 2l5 4-5 4z"];
  return (
    <div className="flex h-[17px] bg-[#efefef] text-[12px] leading-[16px] text-[#111]">
      <div className="ml-0.5 flex">
        {arrows.map((d) => (
          <button key={d} type="button" aria-label="切换布局" className="flex w-[13px] items-center justify-center border-r border-[#bbb]">
            <Svg w={12}>
              <path d={d} fill="#666" stroke="#666" strokeWidth={1} />
            </Svg>
          </button>
        ))}
      </div>
      <button type="button" className="ml-0.5 bg-[#212830] px-[9px] text-white [clip-path:polygon(0_0,100%_0,calc(100%-7px)_100%,7px_100%)]">
        模型
      </button>
      {["布局1", "布局2"].map((t) => (
        <button key={t} type="button" className="flex items-center pl-[5px] text-[11px]">
          {t}
          <Svg w={10} h={16}>
            <path d="M2 15L9 1" stroke="#555" />
          </Svg>
        </button>
      ))}
      <div className="ml-auto flex w-[345px] items-center pr-[22px]">
        <span className="mr-1.5 h-[12px] w-1 rounded-sm border border-[#999] bg-white" />
        <Svg w={5} h={7}>
          <path d="M5 0v7L0 3.500z" fill="#222" stroke="none" />
        </Svg>
        <span className="flex-1" />
        <Svg w={5} h={7}>
          <path d="M0 0v7l5-3.500z" fill="#222" stroke="none" />
        </Svg>
      </div>
    </div>
  );
}

const modes: { label: string; on?: boolean; icon: ReactNode }[] = [
  {
    label: "推断约束",
    icon: (
      <>
        <path d="M2 7h12M7 1v12M5 5h4v4H5z" stroke="#222" />
        <path d="M10 15v-4h3v-2M13 12h3v-3h-3z" stroke="#b8553a" />
      </>
    ),
  },
  { label: "捕捉模式", icon: <path d="M3 4h9M3 7h9M3 10h9M3 13.500h9M15 4v9" strokeDasharray="1.500 1.500" stroke="#222" strokeWidth={1.300} /> },
  { label: "栅格显示", on: true, icon: <path d="M2 2h14v14H2zM2 5.500h14M2 9h14M2 12.500h14M5.500 2v14M9 2v14M12.500 2v14" stroke="#333" fill="#fff" /> },
  { label: "正交模式", icon: <path d="M3 1v14h14M3 9h6v6" /> },
  { label: "极轴追踪", icon: <path d="M14 14H8a4.500 4.500 0 1 1 5-6M8 14l6-10M8 10h6" stroke="#222" /> },
  {
    label: "对象捕捉",
    on: true,
    icon: (
      <>
        <path d="M4 4h12v12H4z" fill="#fff" />
        <circle cx={3.500} cy={3.500} r={2} stroke="#e0683a" />
      </>
    ),
  },
  {
    label: "三维对象捕捉",
    on: true,
    icon: (
      <>
        <path d="M4 5l3-3h9v10l-3 3H4z" fill="#f2f4f6" />
        <circle cx={4} cy={14} r={2} stroke="#e0683a" />
      </>
    ),
  },
  { label: "对象捕捉追踪", on: true, icon: <path d="M13 4L4 14h11" stroke="#222" strokeWidth={1.300} /> },
  {
    label: "动态 UCS",
    on: true,
    icon: (
      <>
        <path d="M3 2v13h13M3 15l9-9" />
        <path d="M13 2l-3 4h3l-1 4 4-5h-3z" fill="#f59a2a" stroke="#c9761a" strokeWidth={0.600} />
      </>
    ),
  },
  { label: "动态输入", on: true, icon: <path d="M2 8h10M7 3v9M9 10h6v3H9z" stroke="#222" strokeWidth={1.300} /> },
  { label: "线宽", icon: <path d="M3 9h12M9 3v12" stroke="#111" strokeWidth={2} /> },
  {
    label: "透明度",
    on: true,
    icon: (
      <>
        <rect x={2} y={2} width={14} height={14} rx={1} fill="#b5d3f0" stroke="#3f7fc0" />
        <path d="M3 5h12M3 9h12M3 13h12" stroke="#7fb0e0" strokeDasharray="2 2" strokeWidth={2} />
      </>
    ),
  },
  { label: "快捷特性", icon: <path d="M6 4h7v10H6zM7.500 7h4M7.500 9h4M7.500 11.500h4" stroke="#222" fill="#eee" /> },
  {
    label: "选择循环",
    icon: (
      <>
        <path d="M1 4h7M4.500 1v7M7 5h6v6H7z" />
        <path d="M9 8h7v7H9z" fill="#57a845" stroke="#2c6b21" />
      </>
    ),
  },
  { label: "注释监视器", icon: <path d="M6.500 2h5v4.500H16v5h-4.500V16h-5v-4.500H2v-5h4.500z" fill="#eef2f6" /> },
];

function StatusButton({ label, on, className, children }: { label: string; on?: boolean; className: string; children: ReactNode }) {
  return (
    <button
      type="button"
      aria-label={label}
      className={clsx(
        "flex shrink-0 items-center justify-center border-r border-[#555]",
        on ? "bg-linear-to-b from-[#d5ecf4] to-[#8cc6dc]" : "bg-linear-to-b from-[#bcbcbc] to-[#9f9f9f]",
        className
      )}
    >
      {children}
    </button>
  );
}

function StatusBar() {
  return (
    <footer className="flex h-[21px] border-t border-[#444] bg-linear-to-b from-[#7c7c7c] to-[#909090]">
      <div className="flex w-[205px] items-center gap-1 border-r border-[#555] bg-linear-to-b from-[#8c8c8c] to-[#9c9c9c] pl-2.5 font-['Liberation_Mono',monospace] text-[10px] text-[#111]">
        <span>4506.0539,</span>
        <span>2832.4960,</span>
        <span>0.0000</span>
      </div>
      {modes.map((m) => (
        <StatusButton key={m.label} label={m.label} on={m.on} className="w-[21px]">
          <Svg w={18}>{m.icon}</Svg>
        </StatusButton>
      ))}
      <div className="ml-auto flex">
        <StatusButton label="模型" className="w-[29px] text-[11px] text-[#111]">
          模型
        </StatusButton>
        <StatusButton label="快速查看布局" className="w-[21px]">
          <Svg w={16}>
            <path d="M3 2h10v10H3zM1 15h14" fill="#eee" />
            <path d="M6 5v5h5z" fill="#333" stroke="none" />
          </Svg>
        </StatusButton>
        <StatusButton label="快速查看图形" className="w-[21px]">
          <Svg w={16}>
            <path d="M1 3h6v6H1zM9 3h6v6H9zM1 13h14" fill="#eee" strokeWidth={1.500} />
          </Svg>
        </StatusButton>
        <StatusButton label="注释比例" className="ml-[18px] w-[49px] gap-1">
          <Svg w={15}>
            <path d="M7.500 1l2 7 5 6-7-3-7 3 5-6z" fill="#fff" />
          </Svg>
          <span className="text-[12px] text-[#222]">1:1</span>
          <Caret small />
        </StatusButton>
        <StatusButton label="注释可见性" className="w-[23px]">
          <Svg w={17}>
            <path d="M7 1l2 7 5 6-7-3-7 3 5-6z" fill="#fff" />
            <circle cx={12} cy={10} r={3} fill="#ffd45a" stroke="#e0862a" />
          </Svg>
        </StatusButton>
        <StatusButton label="自动缩放" className="w-[21px]">
          <Svg w={17}>
            <path d="M8 1l2 7 5 6-7-3-7 3 5-6z" fill="#bbb" stroke="#888" />
          </Svg>
        </StatusButton>
        <StatusButton label="切换工作空间" className="ml-[3px] w-[21px]">
          <Svg w={17}>
            <circle cx={8.500} cy={8.500} r={6} stroke="#444" strokeWidth={3} strokeDasharray="2.500 1.500" />
            <circle cx={8.500} cy={8.500} r={4.500} fill="#e8e8e8" />
          </Svg>
        </StatusButton>
        <StatusButton label="锁定" className="w-[21px]">
          <Svg w={17}>
            <path d="M3 4h11v11H3zM8 4v11M3 9h11" fill="#f4f4f4" strokeWidth={1.500} />
          </Svg>
        </StatusButton>
        <StatusButton label="硬件加速" className="w-[21px]">
          <Svg w={17}>
            <circle cx={9} cy={8} r={6.500} fill="#888" stroke="#777" />
            <path d="M4 5l6 7" stroke="#ddd" strokeWidth={2.500} />
          </Svg>
        </StatusButton>
        <StatusButton label="隔离对象" className="ml-0.5 w-[32px]">
          <Svg w={17}>
            <path d="M7 16h3v-4l4-6H3l4 6z" fill="#f7ec9a" stroke="#8a8040" />
          </Svg>
        </StatusButton>
        <StatusButton label="状态栏菜单" className="w-[13px]">
          <Caret color="#111" />
        </StatusButton>
        <StatusButton label="全屏显示" className="w-[17px]">
          <Svg w={15}>
            <path d="M1 2h13v12H1z" fill="#f6f6f6" />
            <path d="M1 3.500h13" strokeWidth={2} />
          </Svg>
        </StatusButton>
        <span className="flex w-[17px] items-end justify-center pb-0.5">
          <Svg w={13}>
            <path d="M11 1v12M7 5v8M3 9v4" stroke="#ddd" strokeWidth={2.500} strokeDasharray="2.500 1.500" />
          </Svg>
        </span>
      </div>
    </footer>
  );
}

function Watermark() {
  return (
    <div className="absolute right-[39px] bottom-[20px] z-30 flex h-[97px] w-[195px] items-center bg-[#22305a] pl-1.5 text-[#e6e6e4]">
      <svg width="47" height="62" viewBox="36 74 141 186" className="shrink-0" aria-hidden="true">
        <path
          d="M45 104L55 97 50 85 66 95 84 98 78 106 92 114Q84 119 80 124 76 142 90 155 100 162 125 164 150 166 154 182 156 195 152 205 156 225 158 252H144Q144 232 139 215 131 208 127 200 105 205 84 200 76 218 71 252H58Q63 220 59 197 38 178 39 150 42 130 61 119 54 110 45 104z"
          fill="#dddddb"
        />
        <path
          d="M78 100Q95 108 110 101 138 110 152 99 158 87 172 83M86 103Q76 94 79 82M97 104Q88 92 95 80M110 102Q104 92 109 81M124 104Q121 94 128 84M138 105Q138 97 145 92"
          fill="none"
          stroke="#dddddb"
          strokeWidth="4"
        />
      </svg>
      <div className="ml-2 flex flex-col gap-0.5">
        <span className="font-['Inter','Noto_Sans_CJK_SC',sans-serif] text-[29px] leading-[32px] font-medium whitespace-nowrap">3D溜溜网</span>
        <span className="font-['Inter',sans-serif] text-[24px] leading-[24px] whitespace-nowrap">3D66.COM</span>
      </div>
    </div>
  );
}

export default function App() {
  return (
    <div className="relative flex min-h-screen flex-col overflow-hidden rounded-t-md border-t border-l-2 border-t-[#555] border-l-[#7d8a86] bg-[#f4fbfa] pl-1.5 font-['Noto_Sans','Noto_Sans_CJK_SC',sans-serif]">
      <div className="flex h-[7px] items-start">
        <span className="ml-[422px] h-[7px] w-[13px] rounded-full bg-[#e4574a] blur-[2px]" />
        <span className="ml-1 h-[5px] w-[92px] bg-[#f6b9c6] blur-[2px]" />
        <span className="ml-auto h-full w-[46px] bg-linear-to-r from-transparent to-[#7fe4ee]" />
        <span className="h-full w-[269px] bg-linear-to-r from-[#123f78] via-[#3d78b5] to-[#1c569e]" />
      </div>
      <div className="flex flex-1">
        <div className="flex min-w-0 flex-1 flex-col">
          <Header />
          <RibbonTabs />
          <Ribbon />
          <FileTabs />
          <Canvas />
          <LayoutTabs />
          <StatusBar />
        </div>
        <div className="w-2 bg-linear-to-r from-[#8fbbe0] from-25% via-[#1c62ad] via-30% to-[#144f93]" />
      </div>
      <div className="flex h-[7px] items-stretch">
        <span className="flex-1 border-b border-[#6f8f88]" />
        <span className="w-[270px] border-b-2 border-[#0f3d75] bg-linear-to-r from-[#1d6fd0] from-30% via-[#24507c] via-40% to-[#1d6fd0] to-50%" />
      </div>
      <WindowControls />
      <Watermark />
    </div>
  );
}
